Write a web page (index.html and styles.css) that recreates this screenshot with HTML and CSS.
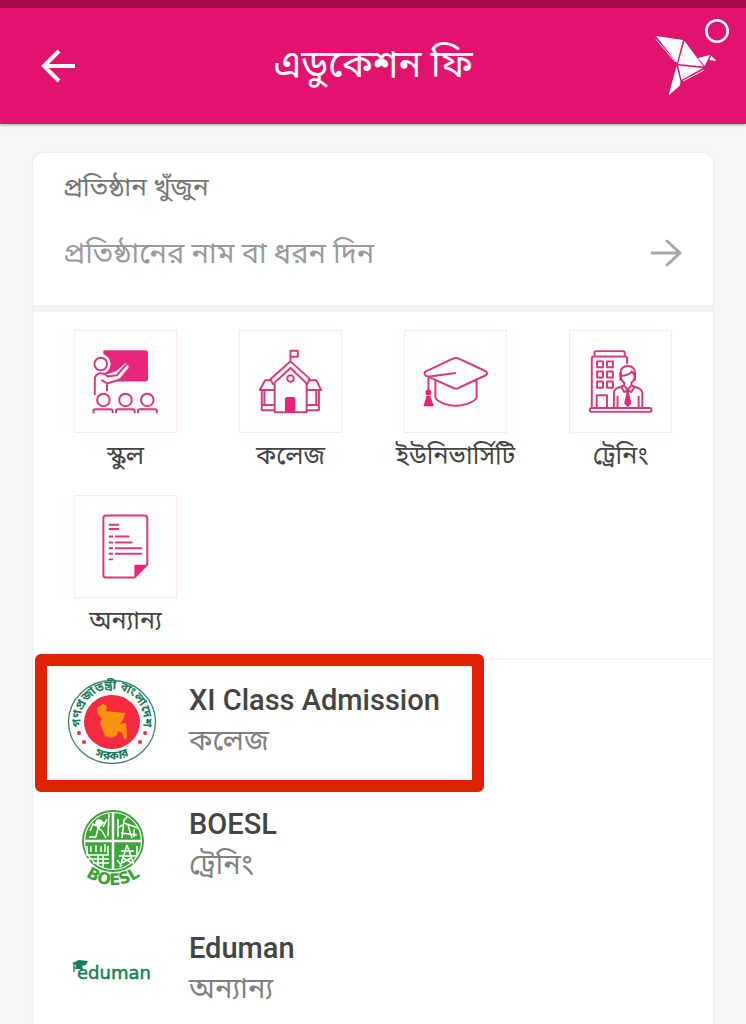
FILE: index.html
```html
<!DOCTYPE html>
<html lang="bn">
<head>
<meta charset="utf-8">
<meta name="viewport" content="width=device-width, initial-scale=1">
<title>এডুকেশন ফি</title>
<link rel="stylesheet" href="styles.css">
</head>
<body>
<div class="screen">
  <header class="topbar">
    <button class="icon-button back" type="button" aria-label="Back">
      <svg width="36" height="36" viewBox="0 0 36 36" fill="none" stroke="#fff" stroke-width="4"><path d="M35 18H4M19 3 4 18l15 15"/></svg>
    </button>
    <h1 class="title">এডুকেশন ফি</h1>
    <button class="icon-button brand" type="button" aria-label="Menu">
      <svg width="80" height="84" viewBox="652 16 80 84">
        <g fill="#fff">
          <path d="M656 36 683 40 677 63z"/><path d="M684.500 41 703.500 66.500 678 64z"/><path d="M678 65.500 703 68 681.500 80z"/>
          <path d="M676.500 66 680.500 81.500 680 85.500 668.500 95.500z"/><path d="M698 58 710 55 704.700 66z"/><path d="M711 55.500 716.500 61 709.500 60z"/>
        </g>
        <path d="M656 39.500 675.500 62M683 81l21-11" fill="none" stroke="#fff"/>
        <circle cx="717" cy="31" r="10.700" fill="none" stroke="#fff" stroke-width="2.600"/>
      </svg>
    </button>
  </header>

  <main class="content">
    <section class="card">
      <form class="search">
        <label class="search-label" for="institution">প্রতিষ্ঠান খুঁজুন</label>
        <div class="search-row">
          <input class="search-input" id="institution" type="text" placeholder="প্রতিষ্ঠানের নাম বা ধরন দিন">
          <button class="icon-button" type="button" aria-label="Search">
            <svg width="32" height="30" viewBox="0 0 32 30" fill="none" stroke="#a8a8a8" stroke-width="3" stroke-linecap="round"><path d="M1 15h28M16 3l13 12-13 12"/></svg>
          </button>
        </div>
      </form>

      <nav class="categories">
        <a class="category" href="#school">
          <svg class="tile" viewBox="45 29 306 306">
            <path class="solid" d="M131 87H258Q266 87 266 95V174Q266 182 258 182H131z"/>
            <g class="gap"><circle class="paper" cx="123" cy="129" r="20"/><path d="M119 175 153 167 177 158 204 134"/></g>
            <circle cx="123" cy="129" r="19"/>
            <path class="paper" d="M105 223V177Q105 157 124 157 137 157 143 167L172 163 198 133Q204 127 209 132 213 137 208 143L181 176 142 188 125 177"/>
            <path d="M142 188V211"/>
            <circle cx="131" cy="238" r="19"/><circle cx="198" cy="238" r="19"/><circle cx="264" cy="238" r="19"/>
            <path d="M101 278V271Q101 266 107 266H153Q159 266 159 271V278M169 278V271Q169 266 175 266H220Q226 266 226 271V278M236 278V271Q236 266 242 266H287Q293 266 293 271V278"/>
          </svg>
          <span>&#2488;&#2509;&#2453;&#2497;&zwnj;&#2482;</span>
        </a>
        <a class="category" href="#college">
          <svg class="tile" viewBox="45 29 306 306">
            <path d="M198 121V89H220V107H198M198 121 256 174 249 190 198 141 145 190 137 175zM150 188V275H247V188"/>
            <path d="M142 178H121L105 208H149M252 178H276L291 208H248M111 208V269H149M284 208V269H248M119 208V253H149M276 208V253H248M111 253H119M276 253H284"/>
            <circle cx="198" cy="173" r="10"/><path class="solid" d="M181 275V236Q181 229 188 229H206Q213 229 213 236V275z"/>
          </svg>
          <span>কলেজ</span>
        </a>
        <a class="category" href="#university">
          <svg class="tile" viewBox="57 29 306 306">
            <path d="M119 152 202 113Q211 108 220 113L302 151Q309 157 302 163L220 201Q211 206 202 201L120 164Q113 158 119 152zM211 156 132 167Q128 168 128 173V208M149 180V230Q151 239 174 249 211 262 248 249 272 239 274 230V180"/>
            <circle class="solid" cx="128" cy="215" r="9"/><path class="solid" d="M122 225H134L144 257H113z"/>
          </svg>
          <span>ইউনিভার্সিটি</span>
        </a>
        <a class="category" href="#training">
          <svg class="tile" viewBox="43 29 306 306">
            <path d="M117 106V96Q117 90 123 90H203Q209 90 209 96V106M109 261V112Q109 106 115 106H210Q216 106 216 112V130"/>
            <path d="M125 121H143V139H125zM155 121H173V139H155zM125 152H143V170H125zM155 152H173V170H155zM125 182H143V201H125zM155 182H173V201H155zM124 261V224H155V261"/>
            <rect x="103" y="262" width="187" height="12" rx="6"/>
            <path d="M176 261V218Q177 204 189 201L207 194V185Q196 178 196 159 196 135 218 135 240 135 240 159 240 178 229 185V194L247 201Q261 205 262 218V261M187 225V261M251 225V261M196 165Q222 164 230 151L240 165M207 194 218 207 229 194M207 194 198 199 207 214 218 207 229 214 238 199"/>
            <path class="solid" d="M212 207H224L222 219 229 248 218 260 207 248 214 219zM193 155H200V179H193zM236 155H243V179H236z"/>
          </svg>
          <span>ট্রেনিং</span>
        </a>
        <a class="category" href="#other">
          <svg class="tile" viewBox="45 29 306 306">
            <path d="M139 88H256Q264 88 264 96V237L225 276H139Q131 276 131 268V96Q131 88 139 88z"/>
            <path class="solid" d="M225 237H264L225 276z"/>
            <path d="M147 116H179M147 129H179M147 152H160M166 152H210M147 170H160M166 170H219M147 187H160M166 187H248M147 204H160M166 204H248M147 221H160"/>
          </svg>
          <span>অন্যান্য</span>
        </a>
      </nav>

      <ul class="institutions">
        <li class="row highlighted">
          <a class="institution" href="#xi-class">
            <svg class="logo" width="92" height="88" viewBox="-46 -44 92 88">
              <defs>
                <path id="seal-top" d="M-30.500 6A31.500 31 0 1 1 30.500 6"/>
                <path id="seal-bottom" d="M-38 0A38 37.500 0 0 0 38 0"/>
              </defs>
              <ellipse rx="43.500" ry="41.500" fill="#fff" stroke="#3c8871" stroke-width="1.300"/>
              <ellipse rx="28" ry="27" fill="#f42a41"/>
              <path fill="#f9930f" d="M-15-14-9-18-5-16-6-11 13-9 12-4 8 2 14 1 15 15 13 18 10 11 6 9 5 13 0 16-7 14-12 1-10-3-14-8z"/>
              <g fill="#f42a41"><circle cx="-33" cy="11" r="2"/><circle cx="-28" cy="20" r="2"/><circle cx="33" cy="11" r="2"/><circle cx="28" cy="20" r="2"/></g>
              <text class="seal-text"><textPath href="#seal-top" startOffset="50%" text-anchor="middle">গণপ্রজাতন্ত্রী বাংলাদেশ</textPath></text>
              <text class="seal-text"><textPath href="#seal-bottom" startOffset="50%" text-anchor="middle">সরকার</textPath></text>
            </svg>
            <span class="details"><span class="name">XI Class Admission</span><span class="kind">কলেজ</span></span>
          </a>
        </li>
        <li class="row">
          <a class="institution" href="#boesl">
            <svg class="logo" width="92" height="88" viewBox="-47 -39 92 88">
              <defs><path id="boesl-arc" d="M-45 0A45 44 0 0 0 45 0"/></defs>
              <circle r="31" fill="#3fa53b"/>
              <circle r="28.500" fill="none" stroke="#fff" stroke-width="1.200"/>
              <path d="M-29 0H29M0-29V29" stroke="#fff" stroke-width="2.500"/>
              <g fill="none" stroke="#fff" stroke-width="1.500">
                <path d="M-23-10-20-17-14-14-9-19M-17-4-15-13-11-10-7-3M-10-14-6-22M-4-27-5-5M-24-4H-17"/><circle cx="-14" cy="-18" r="3" fill="#fff"/>
                <path d="M5-4V-22M9-3 11-21 15-25M11-18 25-13M15-16 19-3M5-13 11-17M21-12V-4M8-8 24-6"/>
                <path d="M-26 5V14H-5V5M-22 5V11M-17 4V11M-12 5V11M-8 3V11M-25 18H-4M-20 22H-4M-15 14V25M-10 14V27"/>
                <path d="M14 4 7 26M14 4 21 24M8 10H21M6 15H23M10 17 19 22M18 17 9 22M24 5V16M4 19 9 25"/>
              </g>
              <text class="boesl-text"><textPath href="#boesl-arc" startOffset="50%" text-anchor="middle">BOESL</textPath></text>
            </svg>
            <span class="details"><span class="name">BOESL</span><span class="kind">ট্রেনিং</span></span>
          </a>
        </li>
        <li class="row">
          <a class="institution" href="#eduman">
            <svg class="logo" width="92" height="88" viewBox="0 0 92 88">
              <path fill="#15805a" d="M6 37 13 34 22 35 20 39 16 40 17 43 9 43 10 39z"/><path d="M8 38V46" stroke="#15805a" stroke-width="1.500"/>
              <text class="eduman-text" x="11" y="53">eduman</text>
            </svg>
            <span class="details"><span class="name">Eduman</span><span class="kind">অন্যান্য</span></span>
          </a>
        </li>
      </ul>
    </section>
  </main>
</div>
</body>
</html>
```
FILE: styles.css
```css
*, *::after { box-sizing: border-box; }

body {
  margin: 0;
  background: #f6f6f6;
  color: #444;
  font-family: Roboto, "Noto Sans Bengali", "Noto Serif Bengali", serif;
}

a { color: inherit; text-decoration: none; }

.screen {
  display: flex;
  flex-direction: column;
  height: 100vh;
}

.topbar {
  display: grid;
  grid-template-columns: 80px 1fr 80px;
  align-items: center;
  flex: none;
  height: 124px;
  padding: 0 14px;
  border-top: 8px solid #a50d4c;
  background: #e2136e;
  box-shadow: 0 1px 3px #a0a0a0;
  z-index: 1;
}

.icon-button {
  display: flex;
  padding: 0;
  border: 0;
  background: none;
  cursor: pointer;
}

.back { padding-left: 26px; }
.brand { align-self: start; padding-top: 8px; }

.title {
  margin: 0;
  padding-bottom: 4px;
  color: #fff;
  font-size: 38px;
  font-weight: 400;
  line-height: 48px;
  text-align: center;
}

.content {
  flex: 1;
  min-height: 0;
  padding: 29px 33px 0;
  overflow-y: auto;
  scrollbar-width: none;
}

.card {
  border-radius: 10px 10px 0 0;
  background: #fff;
  box-shadow: 0 0 3px #ddd;
}

.search {
  padding: 16px 30px 28px;
  border-bottom: 7px solid #f1f1f1;
}

.search-label {
  display: block;
  color: #757575;
  font-size: 26px;
  line-height: 36px;
}

.search-row {
  display: flex;
  align-items: center;
  padding-top: 24px;
}

.search-input {
  flex: 1;
  min-width: 0;
  height: 48px;
  padding: 0;
  border: 0;
  outline: 0;
  background: none;
  color: #444;
  font: inherit;
  font-size: 29px;
}

.search-input::placeholder { color: #9a9a9a; opacity: 1; }

.categories {
  display: grid;
  grid-template-columns: repeat(4, 1fr);
  row-gap: 21px;
  padding: 18px 10px 20px;
  border-bottom: 1px solid #eee;
}

.category {
  display: flex;
  flex-direction: column;
  align-items: center;
  font-size: 25px;
  line-height: 36px;
  gap: 5px;
}

.tile {
  width: 103px;
  height: 103px;
  border: 1px solid #fbe6ed;
  fill: none;
  stroke: #dc3a7e;
  stroke-width: 6;
  stroke-linejoin: round;
}

.solid { fill: #e8257a; stroke: none; }
.gap { stroke: #fff; stroke-width: 20; }
.paper { fill: #fff; }

.institutions {
  margin: 0;
  padding: 0;
  list-style: none;
}

.row { position: relative; }

.highlighted::after {
  content: "";
  position: absolute;
  inset: -6px auto -8px 2px;
  width: 66%;
  border: 12px solid #e02200;
  border-radius: 6px;
  pointer-events: none;
}

.institution {
  display: flex;
  align-items: center;
  gap: 31px;
  height: 124px;
  padding: 0 33px;
}

.logo { flex: none; }

.details {
  display: flex;
  flex-direction: column;
  padding-bottom: 4px;
}

.name {
  font-size: 29px;
  font-weight: 500;
  line-height: 40px;
}

.kind {
  color: #808080;
  font-size: 29px;
  line-height: 40px;
}

.seal-text {
  fill: #15795b;
  font-size: 12px;
  font-weight: 700;
}

.boesl-text {
  fill: #36a336;
  font: 700 16px "DejaVu Sans", sans-serif;
}

.eduman-text {
  fill: #15805a;
  stroke: #15805a;
  stroke-width: 0.5;
  font: 18px "DejaVu Sans", sans-serif;
}
```
